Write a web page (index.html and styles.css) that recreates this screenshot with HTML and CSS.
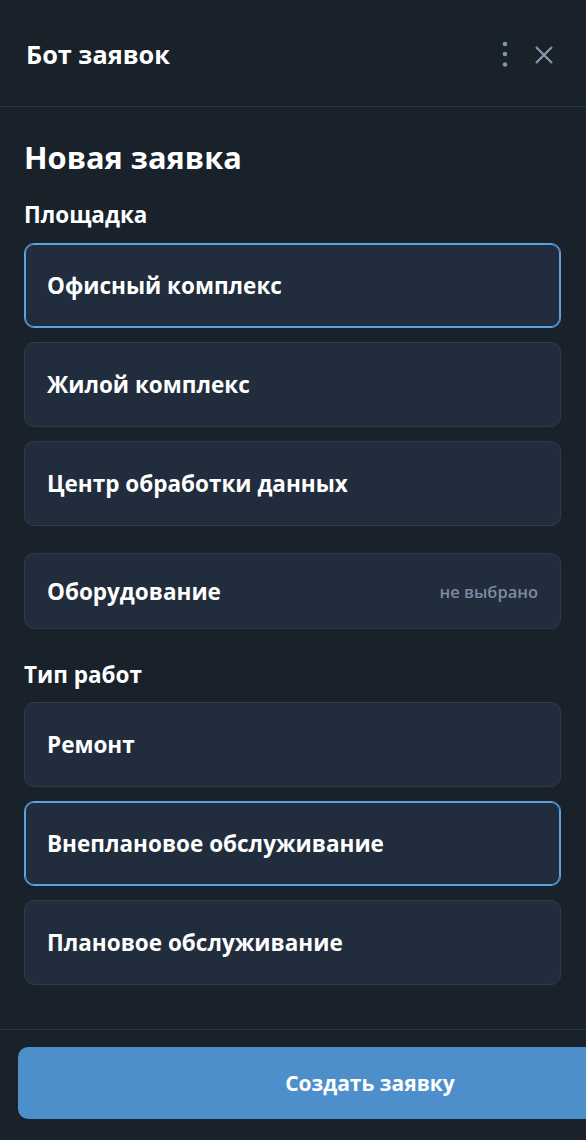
FILE: index.html
```html
<!DOCTYPE html>
<html lang="ru">
<head>
<meta charset="utf-8">
<title>Бот заявок</title>
<link rel="stylesheet" href="styles.css">
</head>
<body>
<div class="app">
  <header class="topbar">
    <div class="topbar-title">Бот заявок</div>
    <div class="topbar-actions">
      <svg class="icon-dots" width="8" height="28" viewBox="0 0 8 28"><circle cx="4" cy="4" r="2.3"/><circle cx="4" cy="14" r="2.3"/><circle cx="4" cy="24.5" r="2.3"/></svg>
      <svg class="icon-close" width="20" height="20" viewBox="0 0 20 20"><path d="M2 2 L18 18 M18 2 L2 18"/></svg>
    </div>
  </header>
  <main class="content">
    <h1 class="page-title">Новая заявка</h1>
    <div class="section-label">Площадка</div>
    <div class="option-list">
      <div class="option selected">Офисный комплекс</div>
      <div class="option">Жилой комплекс</div>
      <div class="option">Центр обработки данных</div>
    </div>
    <div class="option option-compact">
      <span>Оборудование</span>
      <span class="muted">не выбрано</span>
    </div>
    <div class="section-label section-label-2">Тип работ</div>
    <div class="option-list">
      <div class="option">Ремонт</div>
      <div class="option selected">Внеплановое обслуживание</div>
      <div class="option">Плановое обслуживание</div>
    </div>
  </main>
  <footer class="footer">
    <button class="primary-btn">Создать заявку</button>
  </footer>
</div>
</body>
</html>
```

FILE: styles.css
```css
html, body {
  margin: 0;
  padding: 0;
  background: #19212b;
  overflow: hidden;
}
body {
  font-family: "Open Sans", "Noto Sans", sans-serif;
  color: #ffffff;
  width: 586px;
  height: 1140px;
}
.app {
  display: flex;
  flex-direction: column;
  height: 1140px;
}
.topbar {
  height: 106px;
  border-bottom: 1px solid #2a3543;
  display: flex;
  align-items: center;
  justify-content: space-between;
  padding: 0 32px 0 26px;
  box-sizing: content-box;
}
.topbar-title {
  font-size: 25.3px;
  font-weight: 700;
  padding-top: 2px;
}
.topbar-actions {
  display: flex;
  align-items: center;
  gap: 25px;
}
.icon-dots {
  fill: #7f93aa;
  margin-top: 2px;
}
.icon-close {
  stroke: #8a9bb0;
  stroke-width: 2.2;
  fill: none;
  margin-top: 4px;
}
.content {
  padding: 32px 25px 0 24px;
  flex: 1;
}
.page-title {
  margin: 0;
  font-size: 30.8px;
  line-height: 36px;
  font-weight: 700;
}
.section-label {
  margin-top: 27px;
  font-size: 22.5px;
  line-height: 26px;
  font-weight: 700;
}
.section-label-2 {
  margin-top: 33px;
}
.option-list {
  margin-top: 15px;
  display: flex;
  flex-direction: column;
  gap: 14px;
}
.section-label-2 + .option-list {
  margin-top: 14px;
}
.option {
  box-sizing: border-box;
  height: 85px;
  background: #212d3d;
  border: 1px solid #2f3b4a;
  border-radius: 10px;
  display: flex;
  align-items: center;
  justify-content: space-between;
  padding: 0 22px;
  font-size: 22.5px;
  font-weight: 700;
}
.option.selected {
  border-color: #5ba2e3;
  box-shadow: inset 0 0 0 1px #5ba2e3;
}
.option-compact {
  height: 76px;
  margin-top: 27px;
}
.muted {
  font-size: 16.5px;
  font-weight: 600;
  color: #7b8ca1;
}
.footer {
  border-top: 1px solid #2a3543;
  padding: 17px 0 21px 18px;
}
.primary-btn {
  display: block;
  width: 704px;
  height: 72px;
  border: none;
  border-radius: 10px;
  background: #4d8fcb;
  color: #ffffff;
  font-family: "Open Sans", "Noto Sans", sans-serif;
  font-size: 21px;
  font-weight: 700;
}
```
